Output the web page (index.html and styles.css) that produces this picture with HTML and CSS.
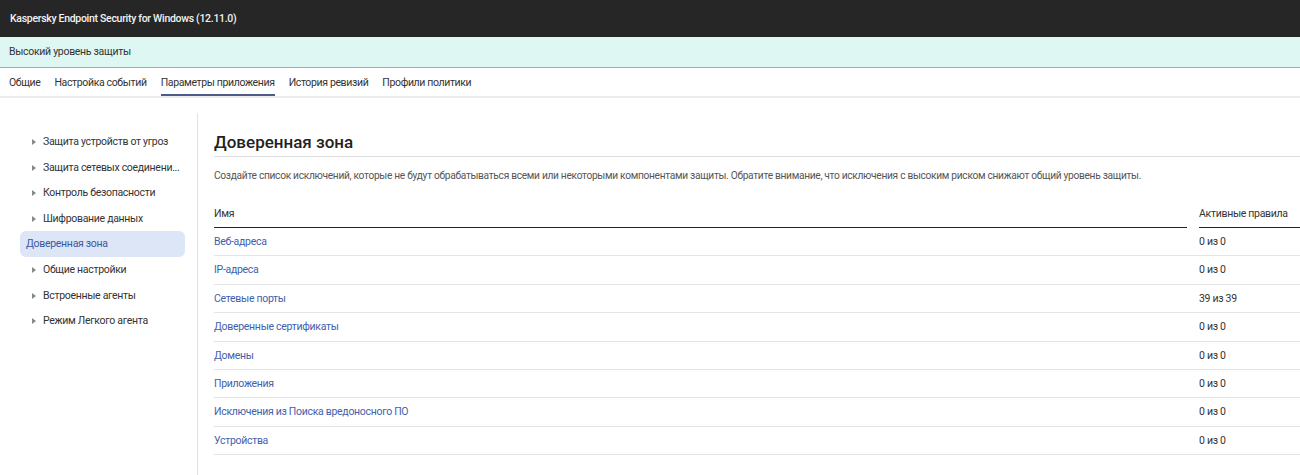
FILE: index.html
```html
<!DOCTYPE html>
<html>
	<head>
		<meta charset="utf-8">
		<title>Kaspersky Endpoint Security for Windows</title>
		<link rel="stylesheet" href="styles.css">
	</head>
	<body>
		<div class="topbar">Kaspersky Endpoint Security for Windows (12.11.0)</div>
		<div class="status">Высокий уровень защиты</div>
		<div class="tabs">
			<a class="tab" href="javascript:;">Общие</a>
			<a class="tab" href="javascript:;">Настройка событий</a>
			<a class="tab active" href="javascript:;">Параметры приложения</a>
			<a class="tab" href="javascript:;">История ревизий</a>
			<a class="tab" href="javascript:;">Профили политики</a>
		</div>
		<div class="page">
			<ul class="sidebar">
				<li class="node">Защита устройств от угроз</li>
				<li class="node">Защита сетевых соединени...</li>
				<li class="node">Контроль безопасности</li>
				<li class="node">Шифрование данных</li>
				<li class="node current">Доверенная зона</li>
				<li class="node">Общие настройки</li>
				<li class="node">Встроенные агенты</li>
				<li class="node">Режим Легкого агента</li>
			</ul>
			<div class="main">
				<h1 class="title">Доверенная зона</h1>
				<p class="desc">Создайте список исключений, которые не будут обрабатываться всеми или некоторыми компонентами защиты. Обратите внимание, что исключения с высоким риском снижают общий уровень защиты.</p>
				<div class="table">
					<div class="head">
						<div class="cell name">Имя</div>
						<div class="cell rules">Активные правила</div>
					</div>
					<div class="row"><a class="cell name" href="javascript:;">Веб-адреса</a><div class="cell rules">0 из 0</div></div>
					<div class="row"><a class="cell name" href="javascript:;">IP-адреса</a><div class="cell rules">0 из 0</div></div>
					<div class="row"><a class="cell name" href="javascript:;">Сетевые порты</a><div class="cell rules">39 из 39</div></div>
					<div class="row"><a class="cell name" href="javascript:;">Доверенные сертификаты</a><div class="cell rules">0 из 0</div></div>
					<div class="row"><a class="cell name" href="javascript:;">Домены</a><div class="cell rules">0 из 0</div></div>
					<div class="row"><a class="cell name" href="javascript:;">Приложения</a><div class="cell rules">0 из 0</div></div>
					<div class="row"><a class="cell name" href="javascript:;">Исключения из Поиска вредоносного ПО</a><div class="cell rules">0 из 0</div></div>
					<div class="row"><a class="cell name" href="javascript:;">Устройства</a><div class="cell rules">0 из 0</div></div>
				</div>
			</div>
		</div>
	</body>
</html>
```

FILE: styles.css
```css
*{
	padding: 0px;
	margin: 0px;
	box-sizing: border-box;
}
body{
	font-family: Roboto, "Liberation Sans", sans-serif;
	font-size: 10.5px;
	letter-spacing: -0.3px;
	color: #222;
	background-color: #fff;
	overflow: hidden;
}
a{
	text-decoration: none;
	color: inherit;
}
.topbar{
	height: 37px;
	line-height: 37px;
	padding-left: 10px;
	background-color: #262626;
	color: #f2f2f2;
	font-weight: 500;
	font-size: 10.5px;
}
.status{
	height: 31px;
	line-height: 30px;
	padding-left: 9px;
	background-color: #dff7f2;
	border-bottom: 1px solid #8fb3ad;
	color: #333;
}
.tabs{
	display: flex;
	gap: 14px;
	height: 30px;
	padding-left: 9px;
	border-bottom: 2px solid #ececec;
}
.tab{
	line-height: 29px;
	letter-spacing: -0.36px;
	color: #333;
	border-bottom: 2px solid transparent;
}
.tab.active{
	border-bottom-color: #4c5b88;
}
.page{
	display: flex;
	padding-top: 15px;
}
.sidebar{
	list-style: none;
	width: 198px;
	flex-shrink: 0;
	height: 365px;
	padding: 16px 12px 0px 20px;
	border-right: 1px solid #e2e2e2;
}
.node{
	height: 25.6px;
	line-height: 25.6px;
	padding-left: 23px;
	position: relative;
	color: #333;
	white-space: nowrap;
}
.node::before{
	content: "";
	position: absolute;
	left: 12px;
	top: 10px;
	border-left: 4px solid #888;
	border-top: 3px solid transparent;
	border-bottom: 3px solid transparent;
}
.node.current{
	padding-left: 6px;
	background-color: #dde6f7;
	border-radius: 6px;
	color: #3c57a0;
}
.node.current::before{
	display: none;
}
.main{
	flex: 1;
	padding-left: 16px;
	overflow: hidden;
}
.title{
	font-size: 17px;
	font-weight: 500;
	letter-spacing: 0px;
	color: #222;
	height: 30px;
	line-height: 30px;
	margin-top: 14px;
	border-bottom: 1px solid #dedede;
}
.desc{
	margin-top: 11px;
	line-height: 16px;
	color: #555;
	font-size: 10.2px;
	white-space: nowrap;
}
.table{
	margin-top: 16px;
	width: 1086px;
}
.head{
	display: flex;
	height: 28px;
}
.head .cell{
	line-height: 27px;
	border-bottom: 1.5px solid #222;
	color: #333;
}
.head .rules{
	margin-left: 12px;
}
.row{
	display: flex;
	height: 28.4px;
	line-height: 27px;
	border-bottom: 1px solid #e4e4e4;
}
.cell.name{
	flex: 1;
}
.row .name{
	color: #4260ad;
}
.cell.rules{
	width: 101px;
	flex-shrink: 0;
}
.row .rules{
	padding-left: 12px;
	width: 113px;
	color: #333;
}
```
